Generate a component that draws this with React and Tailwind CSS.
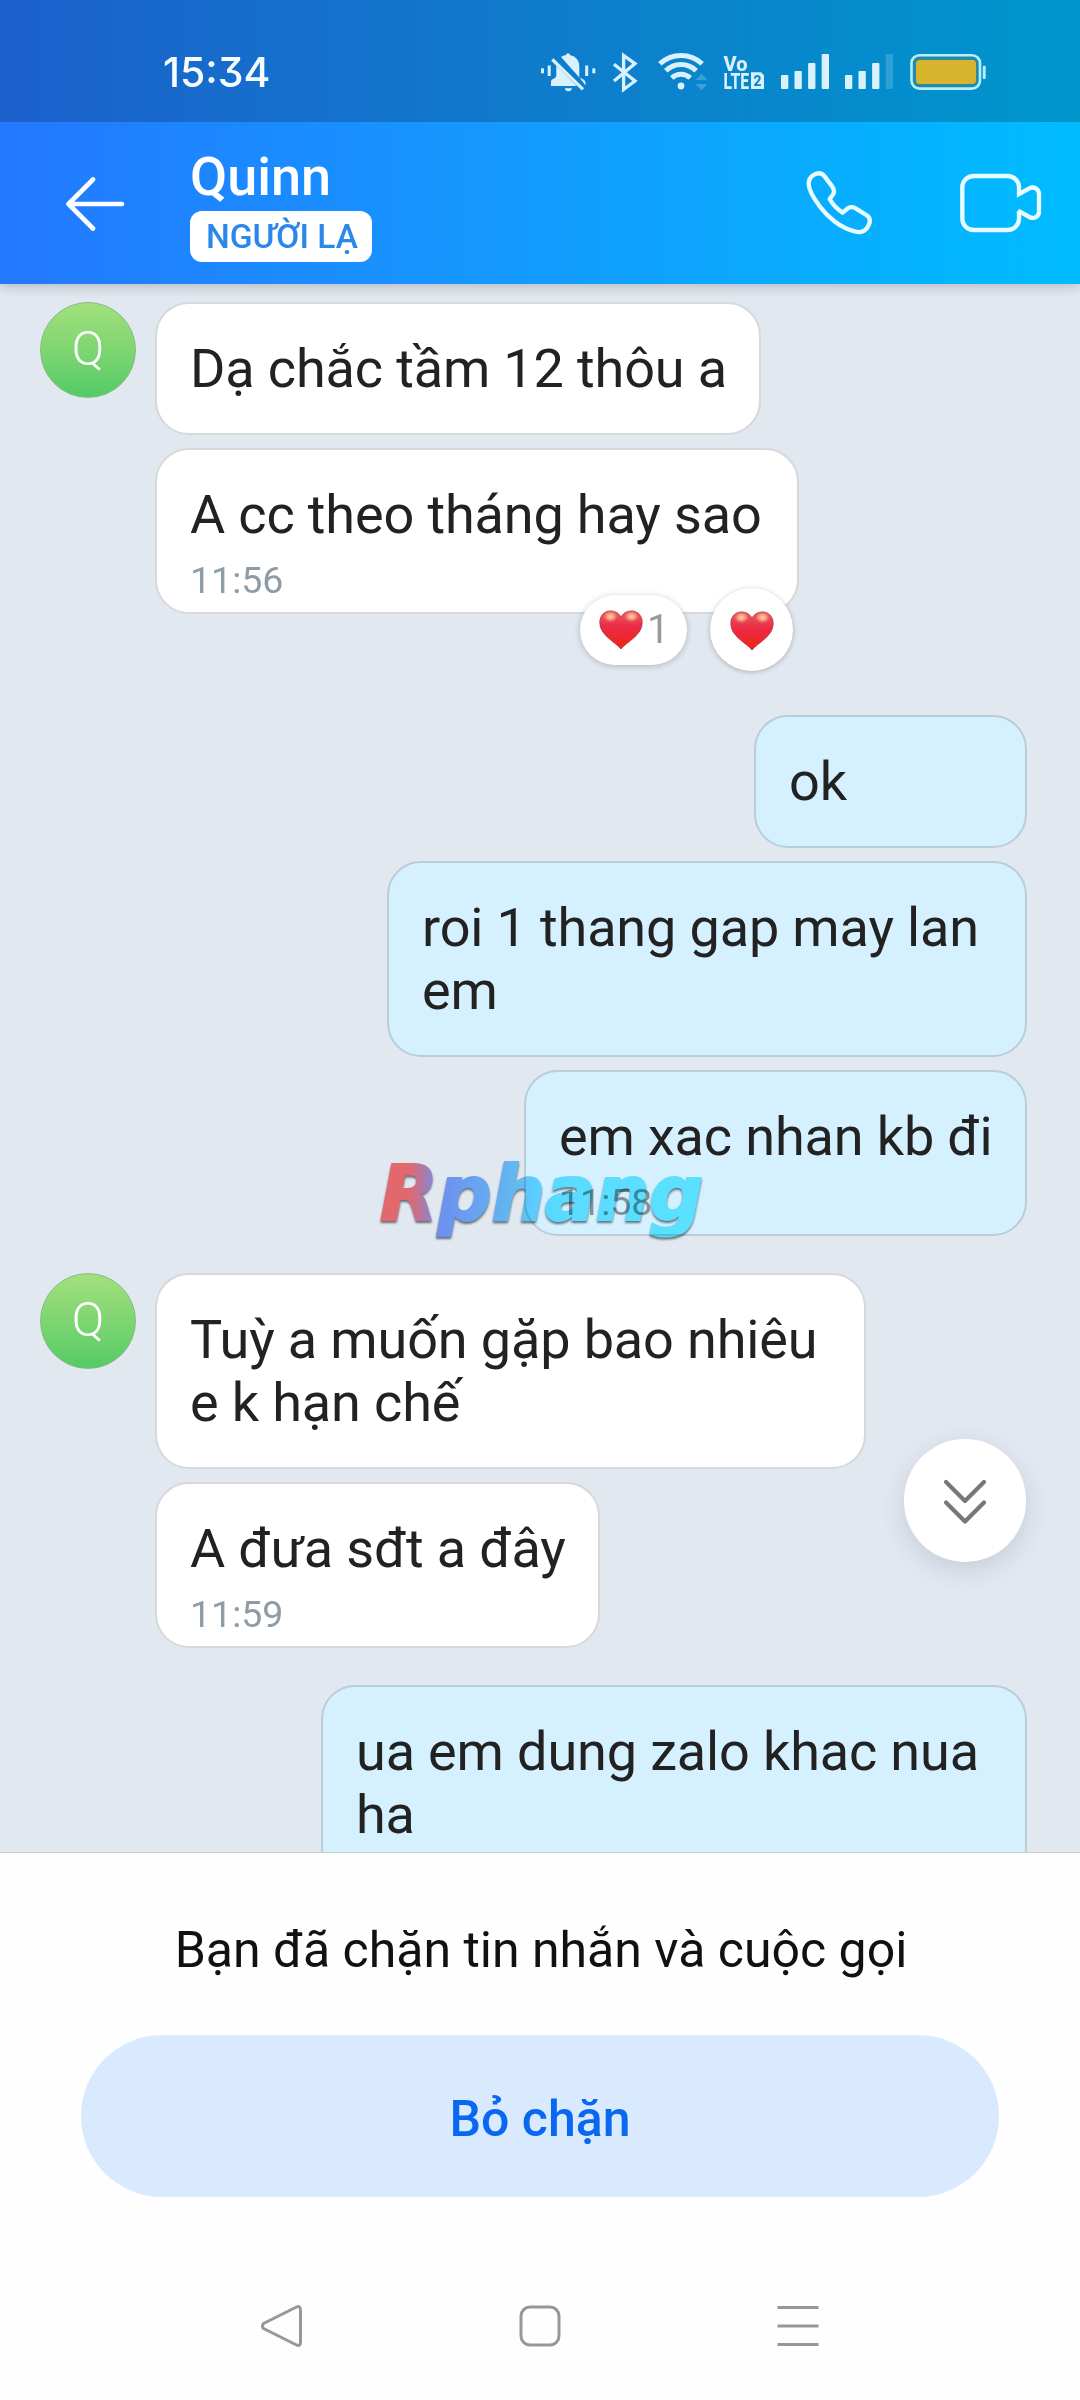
import React from "react";

const ICE = "#d8f1fd";

function BellOff() {
  return (
    <svg width="57" height="44" viewBox="540 50 57 44" fill={ICE}>
      <rect x="541" y="68.3" width="3" height="5" />
      <rect x="547.7" y="65.5" width="3" height="10.5" />
      <rect x="585.2" y="65.5" width="3" height="10.5" />
      <rect x="592.3" y="68.3" width="3" height="5" />
      <path d="M561 57 Q563 55.6 566 55 Q566.5 53.2 568 53.2 Q569.500 53.2 570 55 Q579.300 57 579.300 67 V77.500 Z" />
      <path d="M556.300 65.500 L577 86 H551 V81.500 Q551 80 552.500 79.300 L555 78 Q556.300 77 556.300 75 Z" />
      <path d="M579.500 77.500 L583.500 79.500 Q585.500 80.500 585.500 83 V85.500 Z" />
      <path d="M552.3 59.5 L583 89.3" stroke={ICE} strokeWidth="3.200" />
      <path d="M564.8 88.3 H572 Q571.500 91.200 568.400 91.200 Q565.300 91.200 564.800 88.300 Z" />
    </svg>
  );
}

function Bluetooth() {
  return (
    <svg width="26" height="44" viewBox="612 50 26 44" fill="none" stroke={ICE} strokeWidth="3.3">
      <path d="M614 64.300 L635 81 L623.600 89.500 V55.500 L635 63.600 L614 81" />
    </svg>
  );
}

function Wifi() {
  return (
    <svg width="52" height="44" viewBox="657 50 52 44" fill="none" stroke={ICE} strokeWidth="5">
      <path d="M659.800 63.800 A31 31 0 0 1 702.200 63.800" />
      <path d="M665.800 70.800 A21.500 21.500 0 0 1 696.200 70.800" />
      <path d="M671.800 78 A13 13 0 0 1 690.200 78" />
      <circle cx="681" cy="86" r="3.400" fill={ICE} stroke="none" />
      <g fill={ICE} fillOpacity="0.25" stroke="none">
        <path d="M695.600 80 L701.600 73.800 L707.400 80 Z" />
        <path d="M695.600 84 H707.400 L701.600 90.200 Z" />
      </g>
    </svg>
  );
}

function VoLte() {
  return (
    <svg width="42" height="44" viewBox="723 50 42 44" fill={ICE} fontFamily="Roboto, sans-serif" fontWeight="800">
      <text x="723.600" y="71" fontSize="21" textLength="24" lengthAdjust="spacingAndGlyphs">Vo</text>
      <text x="723.600" y="89" fontSize="22" textLength="25.500" lengthAdjust="spacingAndGlyphs">LTE</text>
      <path d="M751 72.300 H761 L764 75.300 V89 H751 Z" />
      <text x="753.500" y="86" fontSize="15" textLength="8" lengthAdjust="spacingAndGlyphs" fill="#0b84ca">2</text>
    </svg>
  );
}

function Signal({ weak }) {
  return (
    <svg width="48" height="44" viewBox="0 50 48 44" fill={ICE}>
      <rect x="0" y="75" width="7.300" height="14" rx="1" />
      <rect x="13.500" y="71" width="7.300" height="18" rx="1" />
      <rect x="27.100" y="63" width="7.300" height="26" rx="1" />
      <rect x="40.700" y="54" width="7.300" height="35" rx="1" fillOpacity={weak ? 0.2 : 1} />
    </svg>
  );
}

function Battery() {
  return (
    <svg width="76" height="44" viewBox="910 50 76 44" fill="none">
      <rect x="911.500" y="55.200" width="68.500" height="33.400" rx="8" fill="#2f87a0" fillOpacity="0.8" stroke="#b5effb" strokeWidth="2.600" />
      <rect x="916" y="60" width="60" height="24" rx="3.500" fill="#d8b42c" />
      <rect x="982.800" y="65.700" width="2.900" height="13.300" rx="1" fill="#b5effb" />
    </svg>
  );
}

function Phone() {
  return (
    <svg width="68" height="68" viewBox="77 448 204 204" fill="none" stroke="#e8fbff" strokeWidth="13" strokeLinejoin="round">
      <path d="M98 467 C109 458 124 459 131 468 L156 501 C163 511 163 518 157 526 L148 538 C156 553 172 569 187 579 L200 568 C208 561 215 560 226 566 L258 586 C269 593 271 602 266 614 C258 634 246 640 226 636 C180 626 140 590 118 560 C96 530 85 508 85 493 C85 481 90 472 98 467 Z" />
    </svg>
  );
}

function Camera() {
  return (
    <svg width="84" height="62" viewBox="537 456 252 186" fill="none" stroke="#e8fbff" strokeWidth="13">
      <path d="M717 573 V596 A34 34 0 0 1 683 630 H581 A34 34 0 0 1 547 596 V502 A34 34 0 0 1 581 468 H683 A34 34 0 0 1 717 502 V522 L748 505 C762 498 777 507 777 523 V574 C777 591 762 598 748 591 L714 572" />
    </svg>
  );
}

function Heart({ id }) {
  return (
    <svg width="44" height="40" viewBox="0 0 44 40">
      <defs>
        <linearGradient id={id} x1="0" y1="0" x2="0" y2="1">
          <stop offset="0" stopColor="#e8605c" />
          <stop offset="0.4" stopColor="#ea2c47" />
          <stop offset="1" stopColor="#ee2412" />
        </linearGradient>
        <radialGradient id={id + "-gloss"}>
          <stop offset="0" stopColor="#ffd9a6" />
          <stop offset="0.5" stopColor="#fba98a" stopOpacity="0.75" />
          <stop offset="1" stopColor="#ee4452" stopOpacity="0" />
        </radialGradient>
      </defs>
      <path
        d="M22 39 C16 31.500 0.800 25.500 0.800 12.500 C0.800 5.500 5.500 1 11.200 1 C16.500 1 20.500 3.500 22 7.500 C23.500 3.500 27.500 1 32.800 1 C38.500 1 43.200 5.500 43.200 12.500 C43.200 25.500 28 31.500 22 39 Z"
        fill={`url(#${id})`}
        stroke="#bb3a4c"
        strokeWidth="0.900"
      />
      <ellipse cx="11.500" cy="6.500" rx="8.500" ry="6.500" fill={`url(#${id}-gloss)`} />
      <ellipse cx="32.500" cy="6.500" rx="8.500" ry="6.500" fill={`url(#${id}-gloss)`} />
    </svg>
  );
}

function Avatar() {
  return (
    <div className="flex h-24 w-24 shrink-0 items-center justify-center rounded-full border border-[#86bd84] bg-linear-to-b from-[#a2e07c] to-[#52cb66] pb-0.5 text-[48px] leading-none font-light text-white">
      Q
    </div>
  );
}

function Bubble({ mine, width, time, children }) {
  return (
    <div
      className={
        "rounded-[34px] border-2 px-[33px] pt-[33px] " +
        (mine ? "border-[#b9cdd8] bg-[#d5f0ff] " : "border-[#d6d8da] bg-white ") +
        (time ? "pb-2.5" : "pb-[33px]")
      }
      style={{ width }}
    >
      <p className="text-[54px] leading-[63px] tracking-[-0.14px] whitespace-pre text-[#222222]">{children}</p>
      {time && (
        <p className={"mt-3 text-[37.5px] leading-[44px] " + (mine ? "text-[#7f939b]" : "text-[#8f9ba5]")}>{time}</p>
      )}
    </div>
  );
}

function Watermark() {
  return (
    <svg
      className="absolute top-[866px] left-[370px] mix-blend-multiply drop-shadow-[0_2px_1px_rgba(50,60,70,0.7)]"
      width="345"
      height="100"
      viewBox="0 0 345 100"
    >
      <defs>
        <linearGradient id="brand" gradientUnits="userSpaceOnUse" x1="8" y1="0" x2="332" y2="0">
          <stop offset="0" stopColor="#ff7274" />
          <stop offset="0.100" stopColor="#ff7276" />
          <stop offset="0.190" stopColor="#7c9eff" />
          <stop offset="0.370" stopColor="#70c0ff" />
          <stop offset="0.550" stopColor="#6ce8ff" />
          <stop offset="1" stopColor="#6cf0ff" />
        </linearGradient>
      </defs>
      <text
        x="10"
        y="70"
        textLength="323"
        lengthAdjust="spacingAndGlyphs"
        fontFamily="'DejaVu Sans', sans-serif"
        fontWeight="700"
        fontStyle="italic"
        fontSize="77"
        fill="url(#brand)"
        stroke="url(#brand)"
        strokeWidth="2"
      >
        Rphang
      </text>
    </svg>
  );
}

export default function App() {
  return (
    <div className="flex h-[2400px] w-[1080px] flex-col overflow-hidden bg-white font-['Roboto',sans-serif]">
      <div className="relative z-10 bg-linear-to-r from-[#2378ff] to-[#00bcff] shadow-[0_2px_12px_rgba(0,0,0,0.22)]">
        <div className="flex h-[122px] items-start bg-black/20 pr-[94px] pl-[163px]">
          <div className="mt-[46px] text-[41px] leading-[52px] font-medium text-[#f6fdff] [font-family:Inter,sans-serif] [font-feature-settings:'cv09']">
            15:34
          </div>
          <div className="mt-[50px] ml-auto flex">
            <BellOff />
            <div className="ml-[15px]"><Bluetooth /></div>
            <div className="ml-[19px]"><Wifi /></div>
            <div className="ml-[14px]"><VoLte /></div>
            <div className="ml-4"><Signal /></div>
            <div className="ml-4"><Signal weak /></div>
            <div className="ml-[17px]"><Battery /></div>
          </div>
        </div>
        <header className="flex h-[162px] items-center pr-[37px] pl-16">
          <svg width="62" height="56" viewBox="63 175 62 56" fill="none" stroke="#fff" strokeWidth="4.600" strokeLinecap="round" strokeLinejoin="round">
            <path d="M92 179.500 L67.500 204 L92 228.500 M67.500 204 H121" />
          </svg>
          <div className="ml-16 flex flex-col items-start pt-[3px]">
            <h1 className="-mt-[3px] text-[54px] leading-[63px] font-medium text-white">Quinn</h1>
            <span className="mt-[3px] flex h-[51px] w-[182px] items-center justify-center rounded-xl bg-white pt-0.5 pl-0.5 text-[33.5px] font-medium text-[#2a88ea]">
              NGƯỜI LẠ
            </span>
          </div>
          <div className="ml-auto flex items-center gap-[85px]">
            <Phone />
            <Camera />
          </div>
        </header>
      </div>

      <main className="relative h-[1568px] overflow-hidden bg-[#e2e8f0] pt-[18px]">
        <div className="flex gap-[19px] pl-10">
          <Avatar />
          <div className="flex flex-col gap-[13px]">
            <Bubble width={606}>Dạ chắc tầm 12 thôu a</Bubble>
            <div className="relative w-[644px]">
              <Bubble width={644} time="11:56">A cc theo tháng hay sao</Bubble>
              <div className="absolute right-[6px] bottom-[-57px] flex items-center gap-[23px]">
                <div className="flex h-[70px] w-[107px] items-center rounded-full bg-white pl-[19px] shadow-[0_1px_6px_rgba(0,0,0,0.22)]">
                  <Heart id="heart-a" />
                  <span className="ml-1 text-[40px] leading-none text-[#9a9a9a]">1</span>
                </div>
                <div className="flex h-[83px] w-[83px] items-center justify-center rounded-full bg-white pt-0.5 shadow-[0_1px_5px_rgba(0,0,0,0.25)]">
                  <Heart id="heart-b" />
                </div>
              </div>
            </div>
          </div>
        </div>

        <div className="mt-[101px] flex flex-col items-end gap-[13px] pr-[53px]">
          <Bubble mine width={273}>ok</Bubble>
          <Bubble mine width={640}>{"roi 1 thang gap may lan\nem"}</Bubble>
          <Bubble mine width={503} time="11:58">em xac nhan kb đi</Bubble>
        </div>

        <div className="mt-[37px] flex gap-[19px] pl-10">
          <Avatar />
          <div className="flex flex-col gap-[13px]">
            <Bubble width={711}>{"Tuỳ a muốn gặp bao nhiêu\ne k hạn chế"}</Bubble>
            <Bubble width={445} time="11:59">A đưa sđt a đây</Bubble>
          </div>
        </div>

        <div className="mt-[37px] flex justify-end pr-[53px]">
          <Bubble mine width={706}>{"ua em dung zalo khac nua\nha"}</Bubble>
        </div>

        <Watermark />

        <button className="absolute top-[1155px] right-[54px] flex h-[123px] w-[122px] items-center justify-center rounded-full bg-white shadow-[0_8px_24px_rgba(60,70,100,0.16)]">
          <svg width="48" height="50" viewBox="0 0 48 50" fill="none" stroke="#777" strokeWidth="4.200" strokeLinecap="round" strokeLinejoin="round">
            <path d="M5 6 L24 25 L43 6 M5 26.500 L24 45.500 L43 26.500" />
          </svg>
        </button>
      </main>

      <footer className="flex grow flex-col items-center border-t border-[#cccccc] bg-[#fefefe]">
        <p className="mt-[67px] ml-0.5 text-[50px] leading-[60px] text-[#111111]">Bạn đã chặn tin nhắn và cuộc gọi</p>
        <button className="mt-[55px] flex h-[162px] w-[918px] items-center justify-center rounded-full bg-[#daeafe] pt-1.5 text-[50px] font-medium text-[#0a68f0]">
          Bỏ chặn
        </button>
        <nav className="mt-[107px] mr-px flex items-center gap-[216px]">
          <svg width="42" height="44" viewBox="0 0 42 44" fill="none" stroke="#979797" strokeWidth="3" strokeLinejoin="round">
            <path d="M2.500 19.500 L35.500 3 Q39.500 1.500 39.500 6 V38 Q39.500 42.500 35.500 41 L2.500 24.500 Q0.500 22 2.500 19.500 Z" />
          </svg>
          <svg width="42" height="44" viewBox="0 0 42 44" fill="none" stroke="#979797" strokeWidth="3">
            <rect x="2" y="3" width="38" height="38" rx="9" />
          </svg>
          <svg width="42" height="44" viewBox="0 0 42 44" fill="none" stroke="#979797" strokeWidth="3">
            <path d="M0.500 3.500 H41.500 M0.500 22 H41.500 M0.500 40.500 H41.500" />
          </svg>
        </nav>
      </footer>
    </div>
  );
}
